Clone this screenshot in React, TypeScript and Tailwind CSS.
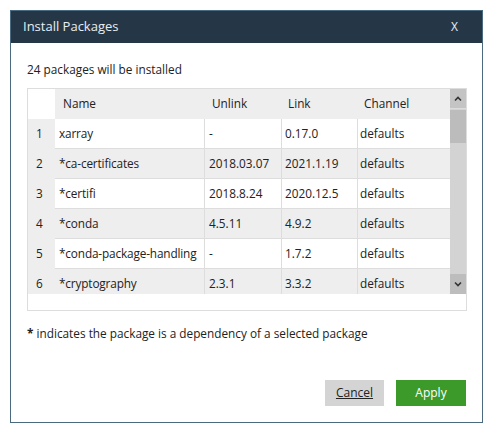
import React from "react";

const rows = [
  ["1", "xarray", "-", "0.17.0", "defaults"],
  ["2", "*ca-certificates", "2018.03.07", "2021.1.19", "defaults"],
  ["3", "*certifi", "2018.8.24", "2020.12.5", "defaults"],
  ["4", "*conda", "4.5.11", "4.9.2", "defaults"],
  ["5", "*conda-package-handling", "-", "1.7.2", "defaults"],
  ["6", "*cryptography", "2.3.1", "3.3.2", "defaults"],
];

export default function App() {
  return (
    <div className="w-[493px] h-[433px] bg-white pt-[10px] pl-[10px]" style={{ fontFamily: '"Open Sans", "Noto Sans", sans-serif' }}>
      <div className="w-[473px] h-[413px] border border-[#4a6a80] flex flex-col">
        <div className="h-[32px] bg-[#253746] flex items-center justify-between pl-[12px] pr-[24px] text-[13px] text-[#e9eef2]">
          <span>Install Packages</span>
          <span className="text-[12px]">X</span>
        </div>
        <div className="flex-1 flex flex-col px-[16px] pb-[16px] text-[#222] text-[11.8px]">
          <div className="mt-[17px] h-[18px] leading-[18px]">24 packages will be installed</div>
          <div className="mt-[10px] w-[440px] h-[223px] border border-[#dddddd] flex flex-col">
            <div className="h-[205px] flex">
              <div className="flex-1 overflow-hidden">
                <div className="flex h-[30px] items-center">
                  <div className="w-[27px] h-full bg-white" />
                  <div className="flex-1 h-full bg-[#eeeeee] flex items-center">
                    <div className="w-[149px] pl-[8px]">Name</div>
                    <div className="w-[77px] pl-[8px]">Unlink</div>
                    <div className="w-[76px] pl-[7px]">Link</div>
                    <div className="flex-1 pl-[7px]">Channel</div>
                  </div>
                </div>
                {rows.map((r, i) => (
                  <div key={i} className="flex h-[30px]">
                    <div className="w-[27px] h-full bg-[#eeeeee] pl-[8px] flex items-center">{r[0]}</div>
                    <div className={`flex-1 flex h-full border-b border-[#dddddd] ${i % 2 === 0 ? "bg-white" : "bg-[#eeeeee]"}`}>
                      <div className="w-[149px] pl-[4px] flex items-center whitespace-nowrap overflow-hidden tracking-[-0.15px]">{r[1]}</div>
                      <div className="w-[77px] pl-[4px] flex items-center border-l border-[#dddddd]">{r[2]}</div>
                      <div className="w-[76px] pl-[3px] flex items-center border-l border-[#dddddd]">{r[3]}</div>
                      <div className="flex-1 pl-[2px] flex items-center border-l border-[#dddddd]">{r[4]}</div>
                    </div>
                  </div>
                ))}
              </div>
              <div className="w-[16px] h-full bg-[#d3d3d3] flex flex-col">
                <div className="h-[20px] bg-[#c4c4c4] flex items-center justify-center border-b border-[#dcdcdc]">
                  <svg width="8" height="6" viewBox="0 0 8 6"><path d="M1 4.5 L4 1.5 L7 4.5" stroke="#333" strokeWidth="1.6" fill="none" /></svg>
                </div>
                <div className="h-[33px] mt-[1px] bg-[#bcbcbc]" />
                <div className="flex-1" />
                <div className="h-[20px] bg-[#bdbdbd] flex items-center justify-center">
                  <svg width="8" height="6" viewBox="0 0 8 6"><path d="M1 1.5 L4 4.5 L7 1.5" stroke="#333" strokeWidth="1.6" fill="none" /></svg>
                </div>
              </div>
            </div>
            <div className="flex-1 bg-white" />
          </div>
          <div className="mt-[13px] h-[18px] leading-[18px]"><span className="font-bold">*</span> indicates the package is a dependency of a selected package</div>
          <div className="mt-auto flex justify-end gap-[12px]">
            <button className="w-[59px] h-[26px] bg-[#d4d4d4] text-[#222] text-[12px] underline">Cancel</button>
            <button className="w-[70px] h-[26px] bg-[#3c9a2a] text-white text-[12px]">Apply</button>
          </div>
        </div>
      </div>
    </div>
  );
}
